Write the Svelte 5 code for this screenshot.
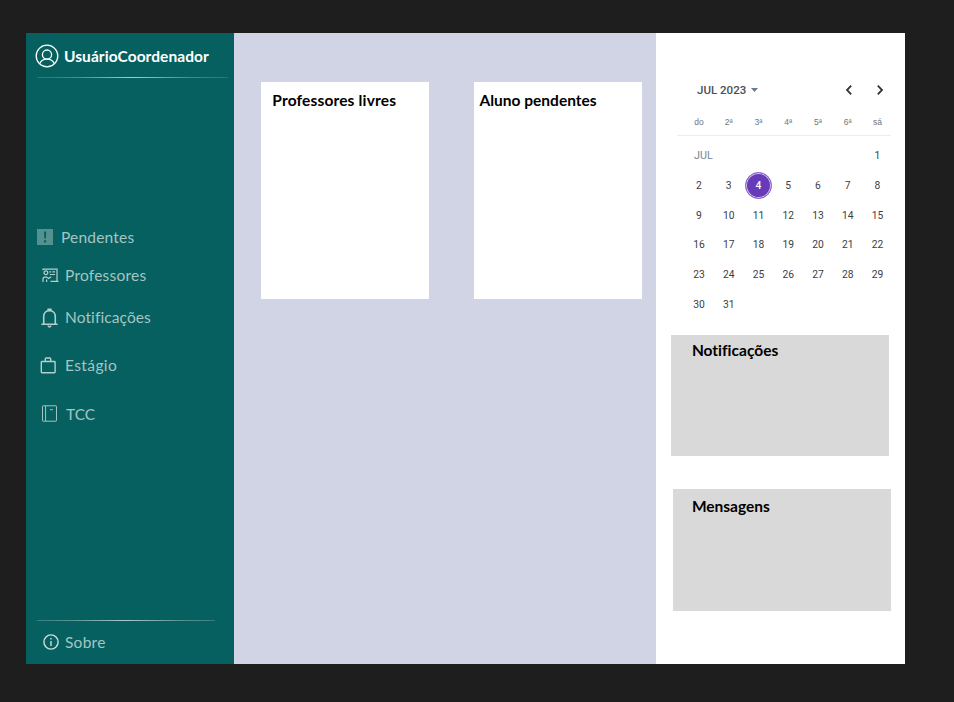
<script>
  const weekdays = ['do', '2ª', '3ª', '4ª', '5ª', '6ª', 'sá'];
  const firstWeek = ['JUL', '', '', '', '', '', 1];
  const days = [...firstWeek, ...Array.from({ length: 30 }, (_, i) => i + 2)];
  const today = 4;
</script>

<div class="screen">
  <div class="app">
    <aside>
      <header class="user">
        <svg width="24" height="24" viewBox="0 0 24 24" fill="none" stroke="#fff" stroke-width="1.3">
          <circle cx="12" cy="12" r="10.8" />
          <circle cx="12" cy="10.6" r="4.6" />
          <path d="M4.7 19.7c1.2-2.8 3.9-4.5 7.3-4.5s6.100 1.700 7.300 4.500" />
        </svg>
        <span class="name">UsuárioCoordenador</span>
      </header>
      <div class="rule top"></div>

      <nav>
        <a class="pend">
          <svg width="16" height="16" viewBox="0 0 16 16">
            <rect width="16" height="16" fill="#fff" fill-opacity=".7" />
            <path d="M7 2.500h2.200l-.3 7H7.300zM7 11.300h2.200v2.200H7z" fill="#05605f" />
          </svg>
          <span>Pendentes</span>
        </a>
        <a class="prof">
          <svg width="17" height="15" viewBox="0 0 17 15" fill="none" stroke="#fff" stroke-width="1.200">
            <path d="M1 2.300V1.200h14v12M8.500 13.400h8M7.300 3.900h1.900M10.500 3.900h2.500M7.800 6.500h5.200" />
            <circle cx="3.900" cy="4.700" r="1.900" />
            <path d="M1 14v-3.200c0-1.200.6-1.700 1.700-1.700h1.900l2.100 1.500 2.500-1.800M4.600 11.400V14" />
          </svg>
          <span>Professores</span>
        </a>
        <a class="noti">
          <svg width="17" height="20" viewBox="0 0 17 20" fill="none" stroke="#fff" stroke-width="1.600">
            <path d="M.4 16.200h16.200M2.700 16V8.400c0-3.300 2.300-5.800 5.800-5.800s5.800 2.500 5.800 5.800V16" />
            <path d="M7.200 2.400V1.200h2.600v1.200M7.200 17.600c0 1.800 2.600 1.800 2.600 0" />
          </svg>
          <span>Notificações</span>
        </a>
        <a class="esta">
          <svg width="16" height="17" viewBox="0 0 16 17" fill="none" stroke="#fff" stroke-width="1.400">
            <rect x="1.300" y="4.500" width="13.800" height="11.200" rx=".7" />
            <path d="M5.300 4.500V1.900q0-.9.900-.9h3.600q.9 0 .9.900v2.600" />
          </svg>
          <span>Estágio</span>
        </a>
        <a class="tcc">
          <svg width="16" height="17" viewBox="0 0 16 17" fill="none" stroke="#fff" stroke-width=".9">
            <rect x="1.500" y=".8" width="14" height="15.400" rx=".6" />
            <path d="M4.600 1v15M9 4.700h3" />
          </svg>
          <span>TCC</span>
        </a>
      </nav>

      <footer>
        <div class="rule bottom"></div>
        <a class="about">
          <svg width="16" height="16" viewBox="0 0 16 16" fill="none" stroke="#fff" stroke-width="1.400">
            <circle cx="8" cy="8" r="7.100" />
            <path d="M8 7v5M8 4v1.600" />
          </svg>
          <span>Sobre</span>
        </a>
      </footer>
    </aside>

    <main>
      <section class="card"><h2 class="t-prof">Professores livres</h2></section>
      <section class="card second"><h2 class="t-aluno">Aluno pendentes</h2></section>
    </main>

    <div class="side">
      <section class="calendar">
        <div class="cal-head">
          <span class="month">JUL 2023</span>
          <svg class="caret" width="7" height="4" viewBox="0 0 7 4"><path d="M0 0h7L3.500 4z" fill="#6b7a90" /></svg>
          <svg class="prev" width="8" height="10" viewBox="0 0 8 10" fill="none" stroke="#2f353c" stroke-width="1.800"><path d="M6.200.7L2 5l4.200 4.300" /></svg>
          <svg width="8" height="10" viewBox="0 0 8 10" fill="none" stroke="#2f353c" stroke-width="1.800"><path d="M1.800.7L6 5 1.800 9.300" /></svg>
        </div>
        <div class="grid weekdays">
          {#each weekdays as d}<span>{d}</span>{/each}
        </div>
        <div class="line"></div>
        <div class="grid days">
          {#each days as d}
            <span class:label={d === 'JUL'}>
              {#if d === today}<b>{d}</b>{:else}{d}{/if}
            </span>
          {/each}
        </div>
      </section>
      <section class="box"><h2 class="t-noti">Notificações</h2></section>
      <section class="box messages"><h2 class="t-mens">Mensagens</h2></section>
    </div>
  </div>
</div>

<style>
  :global(body) { background: #1e1e1e; }
  * { box-sizing: border-box; }
  .screen {
    height: 702px;
    padding: 33px 49px 38px 26px;
    background: #1e1e1e;
    font-family: Lato, 'Liberation Sans', sans-serif;
    font-variant-ligatures: none;
  }
  .app { display: flex; width: 879px; height: 630.600px; }
  svg { display: block; flex: none; }

  aside {
    display: flex;
    flex-direction: column;
    width: 208px;
    background: #05605f;
    color: #fff;
  }
  .user { display: flex; align-items: center; height: 44px; padding: 2px 0 0 9px; }
  .name { margin: -1px 0 0 5px; font-size: 15.500px; font-weight: 700; letter-spacing: .06px; white-space: nowrap; }
  .rule { height: 1px; flex: none; }
  .top {
    width: 191px;
    margin-left: 11px;
    background: linear-gradient(90deg, #fff2, #fff4 20%, #fffa 50%, #fff4 80%, #fff2);
  }
  .bottom {
    width: 178px;
    margin-left: 11px;
    background: linear-gradient(90deg, #fff3, #fff5 20%, #fffa 50%, #fff5 80%, #fff3);
  }
  nav { display: flex; flex-direction: column; padding-top: 139px; }
  nav a, .about {
    display: flex;
    align-items: center;
    font-size: 15.500px;
    line-height: 20px;
    color: #a5c5c4;
    white-space: nowrap;
  }
  nav svg { opacity: .7; }
  .pend { height: 40px; padding-left: 11px; }
  .pend svg { opacity: .45; }
  .pend span { margin-left: 8px; letter-spacing: .2px; }
  .prof { height: 38px; padding-left: 16px; }
  .prof svg { margin-top: -1px; }
  .prof span { margin: -2px 0 0 6px; letter-spacing: .22px; }
  .noti { height: 46px; padding-left: 15px; }
  .noti svg { margin-top: -1px; }
  .noti span { margin: -2px 0 0 7px; letter-spacing: .1px; }
  .esta { height: 50px; padding-left: 14px; }
  .esta svg { margin-top: -1px; }
  .esta span { margin: -2px 0 0 9px; letter-spacing: .4px; }
  .tcc { height: 46px; padding-left: 15px; }
  .tcc svg { margin-top: -1px; }
  .tcc span { margin-left: 9px; }
  footer { margin-top: auto; height: 43.600px; }
  .about { height: 42px; padding-left: 17px; }
  .about svg { margin-top: -1px; opacity: .8; }
  .about span { margin-left: 6px; letter-spacing: .25px; }

  main {
    display: flex;
    align-items: flex-start;
    width: 421.600px;
    padding: 48.500px 0 0 26.500px;
    background: #d1d4e5;
  }
  .card { width: 168.500px; height: 217.800px; background: #fff; }
  .second { margin-left: 44.500px; }
  h2 { margin: 0; font-size: 15.500px; line-height: 20px; font-weight: 700; color: #000; white-space: nowrap; }
  .t-prof { padding: 8.500px 0 0 11.800px; letter-spacing: .16px; }
  .t-aluno { padding: 8.500px 0 0 6px; }

  .side { width: 249.400px; padding-left: 15.800px; background: #fff; }
  .calendar { height: 301.600px; padding: 46px 0 0 6px; font-family: Roboto, sans-serif; }
  .cal-head { display: flex; align-items: center; height: 22px; padding-left: 19.700px; }
  .month { width: 50px; font-size: 11.500px; font-weight: 500; color: #4a4f57; white-space: nowrap; }
  .caret { margin-left: 4px; }
  .prev { margin: 0 23px 0 87px; }
  .grid { display: grid; grid-template-columns: repeat(7, 29.750px); margin-left: 6.700px; }
  .grid span { display: flex; align-items: center; justify-content: center; }
  .weekdays { height: 33px; padding-top: 9px; color: #70757a; }
  .weekdays span { font-family: 'Liberation Sans', sans-serif; font-size: 8.500px; }
  .line { width: 214px; height: 1px; margin-top: 1px; background: #ececf2; }
  .days { grid-auto-rows: 29.700px; padding-top: 5px; font-size: 10.300px; color: #3c4043; }
  .days .label { padding-left: 9px; font-size: 10.800px; color: #7b8591; }
  b {
    display: grid;
    place-items: center;
    width: 27px;
    height: 27px;
    border: 1px solid #8b67c9;
    border-radius: 50%;
    background: #673ab7;
    box-shadow: inset 0 0 0 1px #d8caef;
    color: #fff;
    font-weight: 500;
    flex: none;
  }
  .box { width: 218px; height: 121.500px; background: #d9d9d9; }
  .t-noti { padding: 5px 0 0 20.500px; }
  .messages { margin: 33px 0 0 1.800px; }
  .t-mens { padding: 7px 0 0 18.700px; }
</style>
